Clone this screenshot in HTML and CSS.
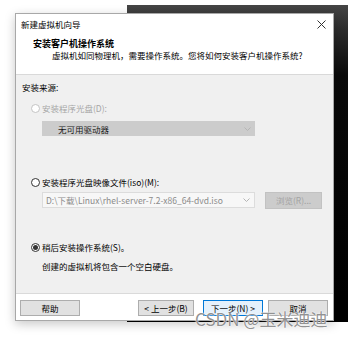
FILE: index.html
```html
<!DOCTYPE html>
<html lang="zh-CN">
<head>
    <meta charset="UTF-8">
    <title>新建虚拟机向导</title>
    <link rel="stylesheet" href="styles.css">
</head>
<body>

    <div class="desktop">
        <div class="backdrop"></div>

        <div class="dialog">
            <div class="titlebar">
                <span>新建虚拟机向导</span>
                <svg class="close" width="9" height="9" viewBox="0 0 9 9">
                    <path d="M0.5 0.5 L8.5 8.5 M8.5 0.5 L0.5 8.5" stroke="#333" stroke-width="1" fill="none"/>
                </svg>
            </div>

            <div class="header">
                <div class="heading">安装客户机操作系统</div>
                <div class="subtitle">虚拟机如同物理机，需要操作系统。您将如何安装客户机操作系统?</div>
            </div>

            <div class="content">
                <div class="label">安装来源:</div>

                <div class="option disabled"><span class="radio"></span>安装程序光盘(D):</div>
                <div class="select drive">
                    <span>无可用驱动器</span>
                    <svg width="7" height="4" viewBox="0 0 7 4"><path d="M0.5 0.5 L3.5 3.5 L6.5 0.5" stroke="#b5b5b5" fill="none"/></svg>
                </div>

                <div class="option iso"><span class="radio"></span>安装程序光盘映像文件(iso)(M):</div>
                <div class="path-row">
                    <div class="select path">
                        <span>D:\下载\Linux\rhel-server-7.2-x86_64-dvd.iso</span>
                        <svg width="7" height="4" viewBox="0 0 7 4"><path d="M0.5 0.5 L3.5 3.5 L6.5 0.5" stroke="#b5b5b5" fill="none"/></svg>
                    </div>
                    <div class="browse">浏览(R)...</div>
                </div>

                <div class="option later"><span class="radio checked"></span>稍后安装操作系统(S)。</div>
                <div class="note">创建的虚拟机将包含一个空白硬盘。</div>
            </div>

            <div class="footer">
                <div class="btn help">帮助</div>
                <div class="btn back">&lt; 上一步(B)</div>
                <div class="btn next">下一步(N) &gt;</div>
                <div class="btn cancel">取消</div>
            </div>
        </div>

        <div class="watermark">CSDN @玉米迪迪</div>
    </div>

</body>
</html>
```

FILE: styles.css
```css
* {
    margin: 0;
    padding: 0;
    box-sizing: border-box;
}

body {
    background: #fff;
    font-family: "Noto Sans CJK SC", "Noto Sans", sans-serif;
    font-size: 8.5px;
    color: #000;
}

.desktop {
    position: relative;
    width: 348px;
    height: 338px;
    overflow: hidden;
    background: #fff;
}

/* window behind the wizard */
.backdrop {
    position: absolute;
    left: 127px;
    top: 5px;
    right: 0;
    height: 317px;
    background: linear-gradient(to bottom, #454545 0, #2c2c2c 25px, #0a0a0a 70px, #000 100%);
}

.dialog {
    position: absolute;
    left: 15px;
    top: 13px;
    width: 319px;
    height: 308px;
    border: 1px solid #a8a8a8;
    background: #fff;
    box-shadow: 0 3px 10px rgba(0, 0, 0, 0.22);
    display: flex;
    flex-direction: column;
}

.titlebar {
    height: 20px;
    padding: 0 7px 0 5px;
    display: flex;
    align-items: center;
    justify-content: space-between;
    line-height: 20px;
}

.header {
    height: 41px;
    padding: 4px 0 0 17px;
    border-bottom: 1px solid #d9d9d9;
}

.heading {
    font-size: 9px;
    font-weight: bold;
    line-height: 12px;
}

.subtitle {
    padding-left: 19px;
    line-height: 11px;
}

.content {
    flex: 1;
    background: #f0f0f0;
    padding: 6px 0 0 6px;
    border-bottom: 1px solid #dadada;
}

.label {
    line-height: 12px;
}

.option {
    display: flex;
    align-items: center;
    gap: 2px;
    padding-left: 9px;
    line-height: 12px;
    margin-top: 9px;
}

.option.disabled {
    color: #a6a6a6;
}

.option.iso {
    margin-top: 40px;
}

.option.later {
    margin-top: 32px;
}

.radio {
    width: 9px;
    height: 9px;
    border: 1px solid #333;
    border-radius: 50%;
    background: #fff;
    position: relative;
}

.disabled .radio {
    border-color: #c4c4c4;
}

.radio.checked::after {
    content: "";
    position: absolute;
    left: 1px;
    top: 1px;
    width: 5px;
    height: 5px;
    border-radius: 50%;
    background: #333;
}

.select {
    display: flex;
    align-items: center;
    justify-content: space-between;
    width: 213px;
    padding-right: 4px;
}

.select.drive {
    margin: 7px 0 0 20px;
    height: 15px;
    padding-left: 16px;
    background: #cccccc;
    color: #1a1a1a;
}

.path-row {
    display: flex;
    gap: 10px;
    margin: 4px 0 0 20px;
}

.select.path {
    height: 16px;
    padding-left: 3px;
    background: #f7f7f7;
    border: 1px solid #dcdcdc;
    color: #8a8a8a;
}

.browse {
    width: 57px;
    height: 17px;
    background: #cccccc;
    border: 1px solid #c2c2c2;
    color: #a3a3a3;
    text-align: center;
    line-height: 15px;
}

.note {
    margin-top: 7px;
    padding-left: 20px;
    line-height: 12px;
}

.footer {
    height: 26px;
    padding: 6px 5px 0 4px;
    display: flex;
    align-items: flex-start;
}

.btn {
    height: 16px;
    background: #e1e1e1;
    border: 1px solid #adadad;
    text-align: center;
    line-height: 14px;
}

.help {
    width: 60px;
}

.back {
    width: 56px;
    margin-left: auto;
}

.next {
    width: 60px;
    margin-left: 9px;
    background: #e5f1fb;
    border-color: #0078d7;
}

.cancel {
    width: 60px;
    margin-left: 5px;
}

.watermark {
    position: absolute;
    left: 195px;
    top: 308px;
    font-size: 17px;
    line-height: 22px;
    color: rgba(110, 110, 110, 0.75);
    text-shadow: 0 0 2px #fff, 0 0 1px #fff;
    white-space: nowrap;
}
```
